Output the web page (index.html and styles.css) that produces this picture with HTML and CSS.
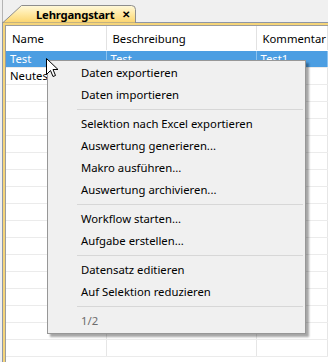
FILE: index.html
```html
<!DOCTYPE html>
<html lang="de">
<head>
    <meta charset="UTF-8">
    <title>Lehrgangstart</title>
    <link rel="stylesheet" href="styles.css">
</head>
<body>
    <div class="tabstrip">
        <div class="tab">
            <svg class="tab-shape" width="136" height="18" viewBox="0 0 136 18">
                <defs>
                    <linearGradient id="tabFill" x1="0" y1="0" x2="0" y2="1">
                        <stop offset="0" stop-color="#fff9dc"/>
                        <stop offset="0.45" stop-color="#ffeaa6"/>
                        <stop offset="1" stop-color="#fbd46c"/>
                    </linearGradient>
                </defs>
                <path d="M0.5,18 L19.5,0.5 L129.5,0.5 Q133.5,0.5 133.5,4.5 L133.5,18 Z" fill="url(#tabFill)" stroke="#8e8e8e"/>
            </svg>
            <span class="tab-title">Lehrgangstart</span>
            <span class="tab-close">✕</span>
        </div>
    </div>

    <div class="frame">
        <div class="grid">
            <table>
                <colgroup>
                    <col class="c1"><col class="c2"><col>
                </colgroup>
                <thead>
                    <tr><th>Name</th><th>Beschreibung</th><th>Kommentar</th></tr>
                </thead>
                <tbody>
                    <tr class="selected"><td>Test</td><td>Test</td><td>Test1</td></tr>
                    <tr><td>Neutes</td><td></td><td></td></tr>
                    <tr><td></td><td></td><td></td></tr>
                    <tr><td></td><td></td><td></td></tr>
                    <tr><td></td><td></td><td></td></tr>
                    <tr><td></td><td></td><td></td></tr>
                    <tr><td></td><td></td><td></td></tr>
                    <tr><td></td><td></td><td></td></tr>
                    <tr><td></td><td></td><td></td></tr>
                    <tr><td></td><td></td><td></td></tr>
                    <tr><td></td><td></td><td></td></tr>
                    <tr><td></td><td></td><td></td></tr>
                    <tr><td></td><td></td><td></td></tr>
                    <tr><td></td><td></td><td></td></tr>
                    <tr><td></td><td></td><td></td></tr>
                    <tr><td></td><td></td><td></td></tr>
                    <tr><td></td><td></td><td></td></tr>
                    <tr><td></td><td></td><td></td></tr>
                </tbody>
            </table>
        </div>
    </div>

    <!-- Kontextmenü -->
    <div class="menu">
        <div class="item">Daten exportieren</div>
        <div class="item">Daten importieren</div>
        <div class="sep"></div>
        <div class="item">Selektion nach Excel exportieren</div>
        <div class="item">Auswertung generieren...</div>
        <div class="item">Makro ausführen...</div>
        <div class="item">Auswertung archivieren...</div>
        <div class="sep"></div>
        <div class="item">Workflow starten...</div>
        <div class="item">Aufgabe erstellen...</div>
        <div class="sep"></div>
        <div class="item">Datensatz editieren</div>
        <div class="item">Auf Selektion reduzieren</div>
        <div class="sep"></div>
        <div class="item disabled">1/2</div>
    </div>

    <svg class="cursor" width="13" height="20" viewBox="0 0 13 20">
        <path d="M0.5,0.5 L0.5,16.5 L4.5,12.5 L7,18.5 L9.5,17.5 L7,11.5 L12,11.5 Z" fill="#fff" stroke="#000" stroke-linejoin="miter"/>
    </svg>
</body>
</html>
```

FILE: styles.css
```css
html, body {
    margin: 0;
    height: 100%;
    overflow: hidden;
}
body {
    font-family: "Noto Sans", "Open Sans", sans-serif;
    font-size: 11.3px;
    color: #000;
    background: #f0f0f0;
    position: relative;
}
.tabstrip {
    height: 22px;
    padding-left: 2px;
    display: flex;
    align-items: flex-end;
    border-left: 1px solid #b4b4b4;
    margin-left: 2px;
}
.tab {
    position: relative;
    z-index: 1;
    width: 136px;
    height: 18px;
    margin-left: -3px;
    margin-bottom: -1px;
    display: flex;
    align-items: center;
}
.tab-shape {
    position: absolute;
    left: 0;
    top: 0;
}
.tab-title {
    position: relative;
    margin-left: 34px;
    font-weight: bold;
    letter-spacing: -0.2px;
}
.tab-close {
    position: relative;
    margin-left: auto;
    margin-right: 8px;
    font-size: 10px;
    font-weight: bold;
}
.frame {
    margin-left: 2px;
    height: 340px;
    border-top: 1px solid #8e96a6;
    border-left: 1px solid #8e96a6;
    padding: 2px 0 0 2px;
    background: #f5d57a;
}
.grid {
    height: 100%;
    background: #fff;
    border-top: 1px solid #9c9c9c;
    border-left: 1px solid #9c9c9c;
}
table {
    border-collapse: collapse;
    width: 100%;
    table-layout: fixed;
}
col.c1 { width: 100px; }
col.c2 { width: 150px; }
th {
    height: 24px;
    padding: 0 0 0 6px;
    text-align: left;
    font-weight: normal;
    border-right: 1px solid #e2e2e2;
    border-bottom: 1px solid #fff;
    white-space: nowrap;
    overflow: hidden;
}
td {
    height: 16px;
    padding: 0 0 0 4px;
    line-height: 16px;
    border-right: 1px solid #e6e6e6;
    border-bottom: 1px solid #ebebeb;
    white-space: nowrap;
    overflow: hidden;
}
tr.selected td {
    background: #4c9ee2;
    color: #fff;
    border-right-color: #8cc2ee;
}
.menu {
    position: absolute;
    left: 47px;
    top: 60px;
    width: 257px;
    padding: 1px 0;
    background: #f0f0f0;
    border: 1px solid #979797;
    box-shadow: 3px 3px 2px rgba(0, 0, 0, 0.35);
}
.item {
    height: 22px;
    line-height: 22px;
    padding-left: 33px;
    white-space: nowrap;
}
.item.disabled {
    color: #6d6d6d;
}
.sep {
    height: 1px;
    margin: 3px 2px 3px 29px;
    background: #d7d7d7;
}
.cursor {
    position: absolute;
    left: 46px;
    top: 58px;
}
```
